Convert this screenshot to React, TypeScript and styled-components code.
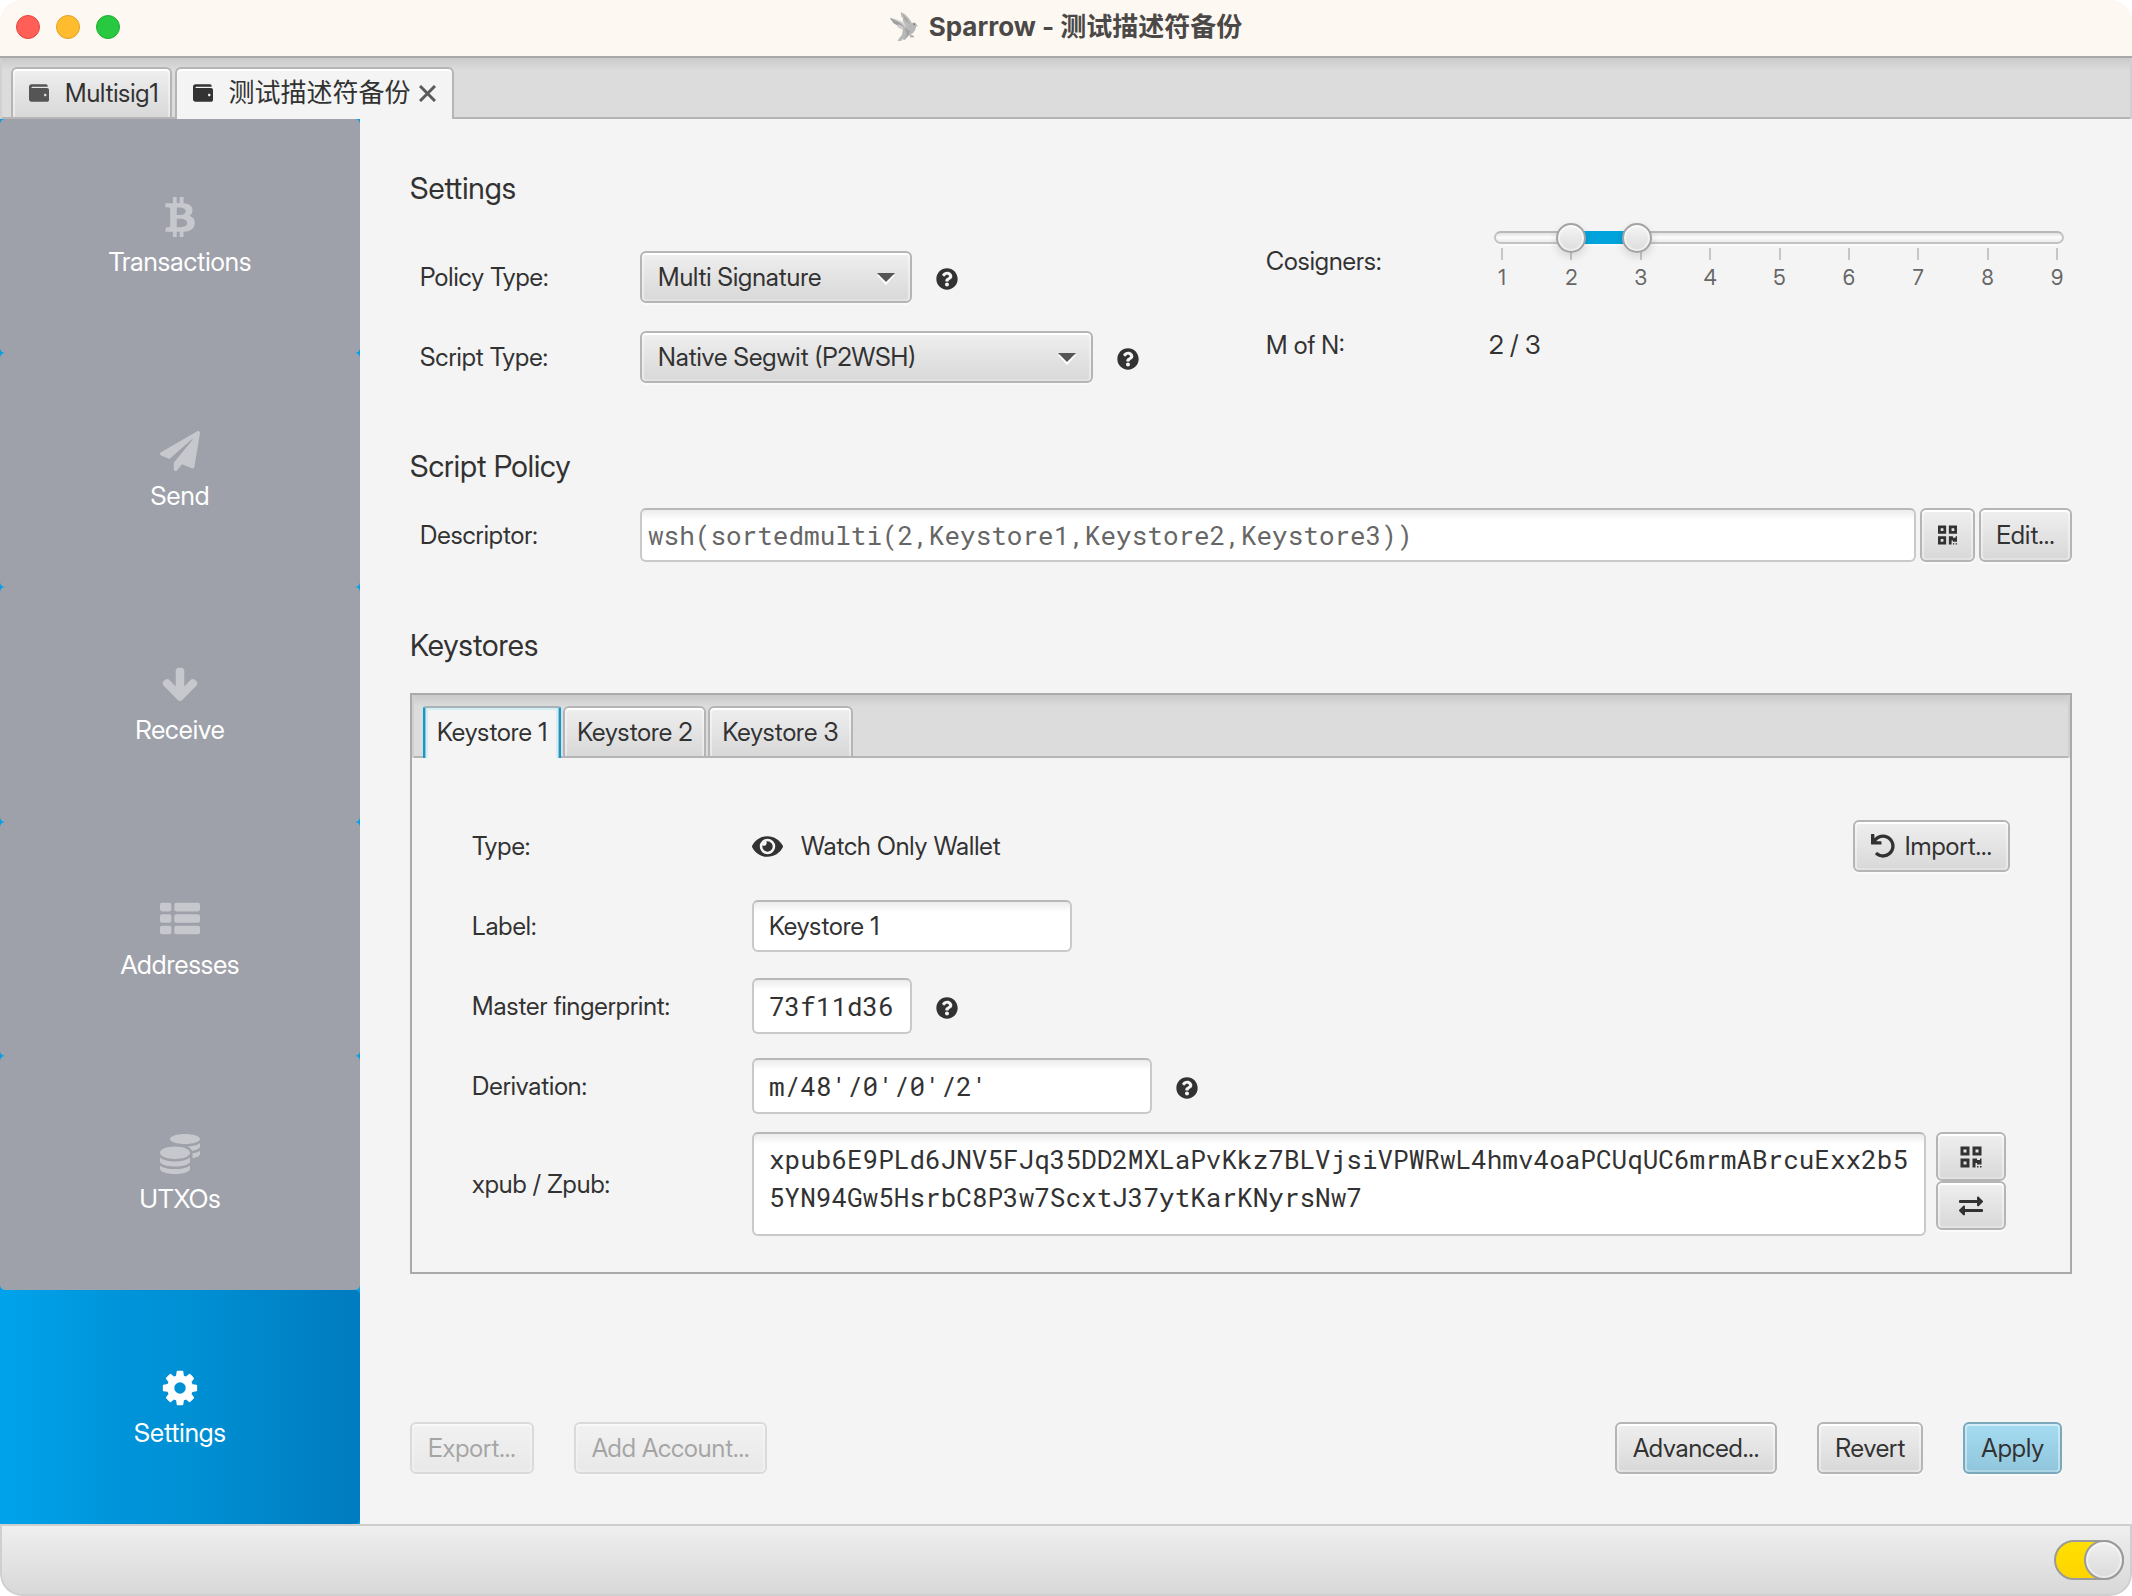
import React, { useState } from 'react';
import styled, { createGlobalStyle, css } from 'styled-components';
import {
  FaBtc,
  FaCoins,
  FaExchangeAlt,
  FaEye,
  FaPaperPlane,
  FaQrcode,
  FaQuestionCircle,
  FaUndo,
  FaWallet,
} from 'react-icons/fa';

const sans = '"Inter Display", "Inter", "Noto Sans CJK SC", sans-serif';
const mono = '"Roboto Mono", "Noto Sans Mono", "DejaVu Sans Mono", monospace';
const ink = '#323232';
const line = '#b5b5b5';
const base = '#f4f4f4';

const GlobalStyle = createGlobalStyle`
  *, *::before, *::after { box-sizing: border-box; }
  body { margin: 0; background: #fff; }
  button, input, select, textarea { font: inherit; color: inherit; margin: 0; }
`;

const Window = styled.div`
  min-height: 100vh;
  display: flex;
  flex-direction: column;
  overflow: hidden;
  border-radius: 22px;
  background: ${base};
  color: ${ink};
  font: 400 25px/30px ${sans};
`;

/* ---------- title bar ---------- */

const TitleBar = styled.header`
  height: 58px;
  flex: none;
  display: grid;
  grid-template-columns: 1fr auto 1fr;
  align-items: center;
  padding: 0 16px 2px;
  background: #fef8f2;
  border-bottom: 2px solid #a9a9a9;
`;

const Lights = styled.div`
  display: flex;
  gap: 16px;
`;

const Light = styled.button<{ $fill: string; $edge: string }>`
  width: 24px;
  height: 24px;
  padding: 0;
  border-radius: 50%;
  border: 1px solid ${p => p.$edge};
  background: ${p => p.$fill};
`;

const Title = styled.h1`
  display: flex;
  align-items: center;
  gap: 11px;
  margin: 0;
  font: 700 26px/32px "Inter", "Noto Sans CJK SC", sans-serif;
  color: #4b4947;
`;

/* ---------- tabs ---------- */

const tabStrip = css`
  display: flex;
  align-items: flex-end;
  flex: none;
  background: linear-gradient(#cacaca, #dcdcdc 12px);
  box-shadow: inset 2px 0 0 #d0d0d0, inset -2px 0 0 #d0d0d0, inset 0 -2px 0 ${line};
`;

const WalletTabs = styled.div`
  ${tabStrip}
  height: 61px;
  padding: 0 11px;
  gap: 3px;
`;

const raisedFace = css`
  background: linear-gradient(#efefef, #d8d8d8);
  box-shadow: inset 0 2px 0 #fff, inset 2px 0 0 rgba(255, 255, 255, 0.4),
    inset -2px 0 0 rgba(255, 255, 255, 0.4);
`;

const Tab = styled.button<{ $selected?: boolean }>`
  height: 52px;
  display: flex;
  align-items: center;
  padding: 0 12px;
  border: 2px solid ${line};
  border-radius: 6px 6px 0 0;
  ${raisedFace}
  ${p =>
    p.$selected &&
    css`
      border-bottom: 0;
      padding-bottom: 2px;
      background: ${base};
      box-shadow: inset 0 2px 0 #fff;
    `}
`;

const WalletTab = styled(Tab)`
  padding-left: 16px;
  padding-right: ${p => (p.$selected ? 16 : 11)}px;
  gap: 16px;
  font-size: ${p => (p.$selected ? 26 : 25)}px;

  > svg {
    color: ${p => (p.$selected ? '#333' : '#555')};
  }
`;

const TabText = styled.span`
  display: flex;
  align-items: center;
  gap: 8px;
`;

const KeystoreTab = styled(Tab)`
  ${p =>
    p.$selected &&
    css`
      border-color: #00a0d6;
      border-top-color: #a6b3b7;
      border-radius: 3px 3px 0 0;
      box-shadow: inset 1px 0 0 #b3b9bb, inset -1px 0 0 #b3b9bb, inset 0 2px 0 #d5edf5,
        inset 3px 0 0 #d5edf5, inset -3px 0 0 #d5edf5;
    `}
`;

/* ---------- side navigation ---------- */

const Body = styled.div`
  flex: 1;
  display: flex;
`;

const SideNav = styled.nav`
  width: 360px;
  flex: none;
  display: flex;
  flex-direction: column;
  background: #00a0e9;
`;

const NavItem = styled.button<{ $active?: boolean }>`
  flex: 1;
  display: flex;
  flex-direction: column;
  align-items: center;
  justify-content: center;
  gap: 10px;
  padding: 2px 0 0;
  border: 0;
  border-radius: 5px;
  font-size: 26px;
  color: #fff;
  background: ${p => (p.$active ? 'linear-gradient(90deg, #00a3eb, #0094da 33%, #008fd3 55%, #007bbf)' : '#9ea1a9')};

  > svg {
    opacity: ${p => (p.$active ? 1 : 0.42)};
  }
`;

/* ---------- content ---------- */

const Content = styled.main`
  flex: 1;
  min-width: 0;
  display: flex;
  flex-direction: column;
  gap: 64px;
  padding: 50px 60px 50px 50px;
`;

const Section = styled.section<{ $gap: number }>`
  display: flex;
  flex-direction: column;
  gap: ${p => p.$gap}px;
`;

const Heading = styled.h2`
  margin: 0;
  font-size: 30px;
  line-height: 38px;
  font-weight: 400;
`;

const Columns = styled.div`
  display: grid;
  grid-template-columns: minmax(0, 1fr) minmax(0, 1fr);
  column-gap: 50px;
`;

const Stack = styled.div<{ $gap: number; $top?: number }>`
  display: flex;
  flex-direction: column;
  gap: ${p => p.$gap}px;
  padding-top: ${p => p.$top ?? 0}px;
`;

const Row = styled.div<{ $height?: number; $indent?: number; $gap?: number }>`
  display: flex;
  align-items: center;
  min-height: ${p => p.$height ?? 52}px;
  padding-left: ${p => p.$indent ?? 0}px;
  gap: ${p => p.$gap ?? 0}px;
`;

const Label = styled.label<{ $width: number }>`
  width: ${p => p.$width}px;
  flex: none;
`;

const Ratio = styled.output`
  font-size: 26px;
`;

const SelectBox = styled.div<{ $width: number }>`
  position: relative;
  width: ${p => p.$width}px;

  > svg {
    position: absolute;
    right: 17px;
    top: 22px;
    pointer-events: none;
  }
`;

const Select = styled.select`
  appearance: none;
  width: 100%;
  height: 52px;
  padding: 0 44px 0 16px;
  border: 2px solid ${line};
  border-radius: 6px;
  background: linear-gradient(#efefef, #d8d8d8);
  box-shadow: inset 0 2px 0 #fff, inset 2px 0 0 rgba(255, 255, 255, 0.4),
    inset -2px 0 0 rgba(255, 255, 255, 0.4), inset 0 -2px 0 rgba(255, 255, 255, 0.25),
    0 2px 0 #fafafa;
`;

const Help = styled.button`
  display: flex;
  margin-left: 24px;
  padding: 4px 0 0;
  border: 0;
  background: none;
`;

const Button = styled.button<{ $primary?: boolean; $width?: number; $height?: number }>`
  height: ${p => p.$height ?? 52}px;
  width: ${p => (p.$width ? `${p.$width}px` : 'auto')};
  display: flex;
  align-items: center;
  justify-content: center;
  gap: 10px;
  padding: 0 16px;
  border: 2px solid ${p => (p.$primary ? '#7aa9bc' : line)};
  border-radius: 6px;
  background: ${p => (p.$primary ? 'linear-gradient(#a6dcf1, #90c6dc)' : 'linear-gradient(#efefef, #d8d8d8)')};
  box-shadow: inset 0 2px 0 ${p => (p.$primary ? '#d3eef8' : '#fff')},
    inset 2px 0 0 rgba(255, 255, 255, 0.4), inset -2px 0 0 rgba(255, 255, 255, 0.4),
    inset 0 -2px 0 rgba(255, 255, 255, 0.25), 0 2px 0 #fafafa;

  &:disabled {
    opacity: 0.4;
  }
`;

const fieldFace = css`
  border: 2px solid #c9c9c9;
  border-top-color: #b8b8b8;
  border-radius: 6px;
  background: linear-gradient(#ececec, #fff 10px);
`;

const Field = styled.input<{ $width?: number; $height?: number; $mono?: boolean }>`
  ${fieldFace}
  height: ${p => p.$height ?? 56}px;
  width: ${p => (p.$width ? `${p.$width}px` : 'auto')};
  padding: 0 10px 0 15px;
  ${p =>
    p.$mono &&
    css`
      font-family: ${mono};
      font-size: 26px;
    `}
`;

const DescriptorField = styled(Field)`
  flex: 1;
  min-width: 0;
  padding-left: 6px;
  color: #666;
`;

const KeyArea = styled.textarea`
  ${fieldFace}
  flex: 1;
  min-width: 0;
  height: 104px;
  padding: 6px 15px;
  resize: none;
  overflow: hidden;
  font: 26px/38px ${mono};
  word-break: break-all;
`;

const KeyButtons = styled.div`
  display: flex;
  flex-direction: column;
  align-self: flex-start;
`;

/* ---------- cosigner range ---------- */

const RangeBox = styled.div`
  flex: 1;
  min-width: 0;
  height: 76px;
  position: relative;
`;

const Track = styled.div`
  position: absolute;
  left: 7px;
  right: 8px;
  top: 8px;
  height: 13px;
  border: 2px solid #c3c3c3;
  border-top-color: #b8b8b8;
  border-radius: 7px;
  background: linear-gradient(#e2e2e2, #fcfcfc 50%, #ebebeb);
  box-shadow: 0 2px 0 #fafafa;
`;

const Filled = styled.div`
  position: absolute;
  top: 8px;
  height: 13px;
  background: #00a3dc;
`;

const Thumb = styled.input<{ $inset: number }>`
  position: absolute;
  left: 0;
  top: 0;
  width: calc(100% - ${p => p.$inset}px);
  height: 30px;
  appearance: none;
  background: none;
  pointer-events: none;

  &::-webkit-slider-thumb {
    appearance: none;
    pointer-events: auto;
    width: 30px;
    height: 30px;
    border-radius: 50%;
    border: 2px solid #a3a3a3;
    background: linear-gradient(#f5f5f5, #dcdcdc);
    box-shadow: inset 0 0 0 2px rgba(255, 255, 255, 0.5), 0 4px 8px rgba(0, 0, 0, 0.12);
  }
`;

const Scale = styled.div`
  display: flex;
  justify-content: space-between;
  padding: 25px 15px 0;
`;

const Mark = styled.span`
  width: 0;
  display: flex;
  flex-direction: column;
  align-items: center;
  gap: 6px;
  font-size: 21px;
  line-height: 24px;
  color: #666;

  &::before {
    content: '';
    width: 2px;
    height: 12px;
    flex: none;
    background: #c6c6c6;
  }
`;

/* ---------- keystore panel ---------- */

const Panel = styled.div`
  border: 2px solid #a9aaa9;
`;

const KeystoreTabs = styled.div`
  ${tabStrip}
  height: 63px;
  padding: 0 11px;
  gap: 2px;
`;

const PanelBody = styled.div`
  display: flex;
  flex-direction: column;
  gap: 18px;
  padding: 60px 60px 36px;
`;

const Kind = styled.div`
  flex: 1;
  display: flex;
  align-items: center;
  gap: 18px;
`;

const KeyRow = styled.div`
  display: flex;
  align-items: center;
  padding-right: 4px;
`;

const KeyGroup = styled.div`
  flex: 1;
  min-width: 0;
  display: flex;
  gap: 10px;
`;

const Footer = styled.footer`
  display: flex;
  gap: 40px;
  margin-top: auto;
  padding-right: 10px;
`;

const Spacer = styled.div`
  flex: 1;
`;

/* ---------- status bar ---------- */

const StatusBar = styled.div`
  height: 72px;
  flex: none;
  display: flex;
  align-items: center;
  justify-content: flex-end;
  padding-right: 6px;
  border: 2px solid #cfcfcf;
  border-radius: 0 0 22px 22px;
  background: linear-gradient(#efefef, #d8d8d8);
`;

const Switch = styled.input`
  appearance: none;
  position: relative;
  width: 70px;
  height: 40px;
  border: 2px solid #9b9b9b;
  border-radius: 20px;
  background: linear-gradient(#ffe000, #ffd400);

  &::before {
    content: '';
    position: absolute;
    top: -2px;
    right: -2px;
    width: 40px;
    height: 40px;
    border: 2px solid #9b9b9b;
    border-radius: 50%;
    background: linear-gradient(#f0f0f0, #dadada);
    box-shadow: inset 0 0 0 2px rgba(255, 255, 255, 0.45);
  }
`;

/* ---------- drawings ---------- */

const Sparrow = () => (
  <svg width="28" height="30" viewBox="0 0 84 90" aria-hidden="true">
    <path fill="#bcbcbc" d="M32 0 L44 6 L54 16 L62 26 L67 36 L60 48 L48 44 L38 26 L40 20 L34 14 Z" />
    <path fill="#a4a4a4" d="M34 2 L52 22 L60 38 L46 24 L40 20 L42 14 Z" />
    <path fill="#cdcdcd" d="M0 17 L18 22 L36 30 L50 42 L44 54 L34 52 L22 46 L24 42 L10 34 L12 30 L2 24 Z" />
    <path fill="#a0a0a0" d="M0 17 L30 32 L46 48 L24 36 L26 42 L10 33 Z" />
    <path fill="#b8b8b8" d="M40 44 C52 46 58 38 66 33 C72 30 78 33 80 38 L84 44 L78 43 C78 54 70 66 56 72 L44 84 L36 82 L34 87 L22 86 L36 68 Z" />
    <path fill="#a2a2a2" d="M44 48 L62 58 L54 70 L44 82 L50 66 Z" />
    <path fill="#9c9c9c" d="M58 68 L72 72 L70 77 L66 74 L60 78 L62 73 Z" />
    <circle cx="73" cy="37" r="3" fill="#808080" />
  </svg>
);

const ArrowDown = () => (
  <svg width="40" height="40" viewBox="0 0 1792 1792" fill="currentColor" aria-hidden="true">
    <path d="M1675 832q0 53-37 90l-651 652q-39 37-91 37-53 0-90-37l-651-652q-38-36-38-90 0-53 38-91l74-75q39-37 91-37 53 0 90 37l294 294v-704q0-52 38-90t90-38h128q52 0 90 38t38 90v704l294-294q37-37 90-37 52 0 91 37l75 75q37 39 37 91z" />
  </svg>
);

const List = () => (
  <svg width="40" height="40" viewBox="0 0 1792 1792" fill="currentColor" aria-hidden="true">
    {[128, 640, 1152].map(y => (
      <g key={y}>
        <rect x="0" y={y} width="512" height="384" rx="96" />
        <rect x="640" y={y} width="1152" height="384" rx="96" />
      </g>
    ))}
  </svg>
);

const Cog = () => (
  <svg width="40" height="40" viewBox="0 0 1792 1792" fill="currentColor" aria-hidden="true">
    <path d="M1152 896q0-106-75-181t-181-75-181 75-75 181 75 181 181 75 181-75 75-181zm512-109v222q0 12-8 23t-20 13l-185 28q-19 54-39 91 35 50 107 138 10 12 10 25t-9 23q-27 37-99 108t-94 71q-12 0-26-9l-138-108q-44 23-91 38-16 136-29 186-7 28-36 28h-222q-14 0-24.5-8.5t-11.5-21.5l-28-184q-49-16-90-37l-141 107q-10 9-25 9-14 0-25-11-126-114-165-168-7-10-7-23 0-12 8-23 15-21 51-66.5t54-70.5q-27-50-41-99l-183-27q-13-2-21-12.5t-8-23.5v-222q0-12 8-23t19-13l186-28q14-46 39-92-40-57-107-138-10-12-10-24 0-10 9-23 26-36 98.5-107.5t94.5-71.5q13 0 26 10l138 107q44-23 91-38 16-136 29-186 7-28 36-28h222q14 0 24.5 8.5t11.5 21.5l28 184q49 16 90 37l142-107q9-9 24-9 13 0 25 10 129 119 165 170 7 8 7 22 0 12-8 23-15 21-51 66.5t-54 70.5q26 50 41 98l183 28q13 2 21 12.5t8 23.5z" />
  </svg>
);

const Caret = () => (
  <svg width="18" height="12" viewBox="0 0 18 12" aria-hidden="true">
    <path d="M0 2h18l-9 10z" fill="#fff" />
    <path d="M0 0h18l-9 9z" fill="#565656" />
  </svg>
);

const Cross = () => (
  <svg width="17" height="17" viewBox="0 0 17 17" aria-hidden="true">
    <path d="M1 1l15 15M16 1l-15 15" stroke="#5a5a5a" strokeWidth="3" />
  </svg>
);

const HelpButton = ({ topic }: { topic: string }) => (
  <Help type="button" aria-label={topic}>
    <FaQuestionCircle size={22} />
  </Help>
);

const navItems = [
  { label: 'Transactions', icon: <FaBtc size={40} /> },
  { label: 'Send', icon: <FaPaperPlane size={40} /> },
  { label: 'Receive', icon: <ArrowDown /> },
  { label: 'Addresses', icon: <List /> },
  { label: 'UTXOs', icon: <FaCoins size={40} /> },
  { label: 'Settings', icon: <Cog /> },
];

const counts = [1, 2, 3, 4, 5, 6, 7, 8, 9];
const highInset = 16;

function CosignerRange({ low, high, onLow, onHigh }: {
  low: number;
  high: number;
  onLow: (n: number) => void;
  onHigh: (n: number) => void;
}) {
  const at = (n: number, inset: number) => `calc(15px + (100% - ${30 + inset}px) * ${(n - 1) / 8})`;
  return (
    <RangeBox>
      <Track />
      <Filled style={{ left: at(low, 0), right: `calc(100% - ${at(high, highInset).slice(4)})` }} />
      <Scale>
        {counts.map(n => (
          <Mark key={n}>{n}</Mark>
        ))}
      </Scale>
      <Thumb
        id="cosigners"
        type="range"
        min={1}
        max={9}
        value={low}
        $inset={0}
        onChange={e => onLow(Math.min(+e.target.value, high))}
      />
      <Thumb
        aria-label="Total cosigners"
        type="range"
        min={1}
        max={9}
        value={high}
        $inset={highInset}
        onChange={e => onHigh(Math.max(+e.target.value, low))}
      />
    </RangeBox>
  );
}

export default function App() {
  const [low, setLow] = useState(2);
  const [high, setHigh] = useState(3);
  const [keystore, setKeystore] = useState(0);

  return (
    <>
      <GlobalStyle />
      <Window>
        <TitleBar>
          <Lights>
            <Light type="button" aria-label="Close" $fill="#ff5f57" $edge="#e2463f" />
            <Light type="button" aria-label="Minimise" $fill="#febc2e" $edge="#e0a028" />
            <Light type="button" aria-label="Zoom" $fill="#28c840" $edge="#1fae33" />
          </Lights>
          <Title>
            <Sparrow />
            Sparrow - 测试描述符备份
          </Title>
        </TitleBar>

        <WalletTabs role="tablist">
          <WalletTab type="button" role="tab" aria-selected={false}>
            <FaWallet size={20} />
            <TabText>Multisig1</TabText>
          </WalletTab>
          <WalletTab type="button" role="tab" aria-selected $selected>
            <FaWallet size={20} />
            <TabText>
              测试描述符备份
              <Cross />
            </TabText>
          </WalletTab>
        </WalletTabs>

        <Body>
          <SideNav>
            {navItems.map(item => (
              <NavItem key={item.label} type="button" $active={item.label === 'Settings'}>
                {item.icon}
                {item.label}
              </NavItem>
            ))}
          </SideNav>

          <Content>
            <Columns>
              <Section $gap={44}>
                <Heading>Settings</Heading>
                <Stack $gap={28}>
                  <Row $indent={10}>
                    <Label htmlFor="policy" $width={220}>Policy Type:</Label>
                    <SelectBox $width={272}>
                      <Select id="policy" defaultValue="multi">
                        <option value="multi">Multi Signature</option>
                        <option value="single">Single Signature</option>
                      </Select>
                      <Caret />
                    </SelectBox>
                    <HelpButton topic="About policy types" />
                  </Row>
                  <Row $indent={10}>
                    <Label htmlFor="script" $width={220}>Script Type:</Label>
                    <SelectBox $width={453}>
                      <Select id="script" defaultValue="p2wsh">
                        <option value="p2wsh">Native Segwit (P2WSH)</option>
                        <option value="p2sh">Legacy (P2SH)</option>
                      </Select>
                      <Caret />
                    </SelectBox>
                    <HelpButton topic="About script types" />
                  </Row>
                </Stack>
              </Section>
              <Stack $gap={30} $top={54}>
                <Row>
                  <Label htmlFor="cosigners" $width={221}>Cosigners:</Label>
                  <CosignerRange low={low} high={high} onLow={setLow} onHigh={setHigh} />
                </Row>
                <Row $height={32}>
                  <Label as="span" $width={223}>M of N:</Label>
                  <Ratio>{low} / {high}</Ratio>
                </Row>
              </Stack>
            </Columns>

            <Section $gap={23}>
              <Heading>Script Policy</Heading>
              <Row $indent={10} $height={54} $gap={4}>
                <Label htmlFor="descriptor" $width={216}>Descriptor:</Label>
                <DescriptorField
                  id="descriptor"
                  $mono
                  $height={54}
                  readOnly
                  value="wsh(sortedmulti(2,Keystore1,Keystore2,Keystore3))"
                />
                <Button type="button" aria-label="Show descriptor QR" $width={55} $height={54}>
                  <FaQrcode size={24} />
                </Button>
                <Button type="button" $height={54} $width={93}>Edit...</Button>
              </Row>
            </Section>

            <Section $gap={29}>
              <Heading>Keystores</Heading>
              <Panel>
                <KeystoreTabs role="tablist">
                  {['Keystore 1', 'Keystore 2', 'Keystore 3'].map((name, i) => (
                    <KeystoreTab
                      key={name}
                      type="button"
                      role="tab"
                      aria-selected={i === keystore}
                      $selected={i === keystore}
                      onClick={() => setKeystore(i)}
                    >
                      {name}
                    </KeystoreTab>
                  ))}
                </KeystoreTabs>
                <PanelBody>
                  <Stack $gap={24}>
                    <Row $height={56}>
                      <Label as="span" $width={280}>Type:</Label>
                      <Kind>
                        <FaEye size={31} />
                        Watch Only Wallet
                      </Kind>
                      <Button type="button">
                        <FaUndo size={24} />
                        Import...
                      </Button>
                    </Row>
                    <Row $height={56}>
                      <Label htmlFor="label" $width={280}>Label:</Label>
                      <Field id="label" $width={320} $height={52} defaultValue="Keystore 1" />
                    </Row>
                    <Row $height={56}>
                      <Label htmlFor="fingerprint" $width={280}>Master fingerprint:</Label>
                      <Field id="fingerprint" $mono $width={160} defaultValue="73f11d36" />
                      <HelpButton topic="About master fingerprints" />
                    </Row>
                    <Row $height={56}>
                      <Label htmlFor="derivation" $width={280}>Derivation:</Label>
                      <Field id="derivation" $mono $width={400} defaultValue="m/48'/0'/0'/2'" />
                      <HelpButton topic="About derivation paths" />
                    </Row>
                  </Stack>
                  <KeyRow>
                    <Label htmlFor="xpub" $width={280}>xpub / Zpub:</Label>
                    <KeyGroup>
                      <KeyArea
                        id="xpub"
                        spellCheck={false}
                        defaultValue="xpub6E9PLd6JNV5FJq35DD2MXLaPvKkz7BLVjsiVPWRwL4hmv4oaPCUqUC6mrmABrcuExx2b55YN94Gw5HsrbC8P3w7ScxtJ37ytKarKNyrsNw7"
                      />
                      <KeyButtons>
                        <Button type="button" aria-label="Show xpub QR" $width={70} $height={49}>
                          <FaQrcode size={24} />
                        </Button>
                        <Button type="button" aria-label="Switch key format" $width={70} $height={49}>
                          <FaExchangeAlt size={24} />
                        </Button>
                      </KeyButtons>
                    </KeyGroup>
                  </KeyRow>
                </PanelBody>
              </Panel>
            </Section>

            <Footer>
              <Button type="button" disabled>Export...</Button>
              <Button type="button" disabled>Add Account...</Button>
              <Spacer />
              <Button type="button">Advanced...</Button>
              <Button type="button">Revert</Button>
              <Button type="button" $primary>Apply</Button>
            </Footer>
          </Content>
        </Body>

        <StatusBar>
          <Switch type="checkbox" role="switch" aria-label="Server connection" defaultChecked />
        </StatusBar>
      </Window>
    </>
  );
}
